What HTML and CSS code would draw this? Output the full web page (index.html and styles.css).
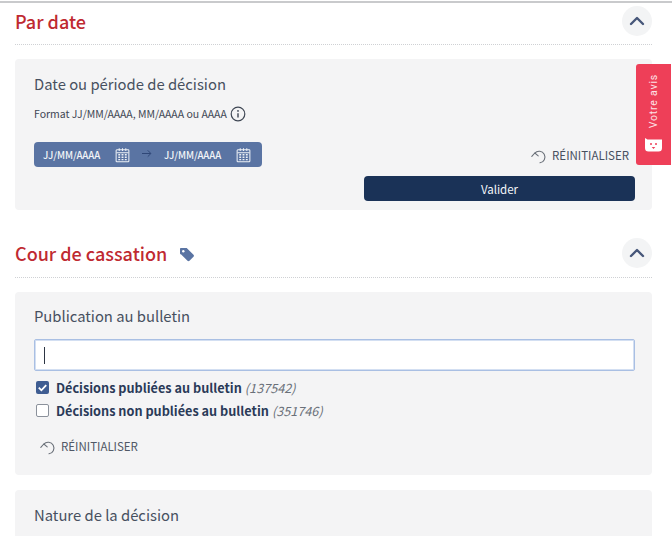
FILE: index.html
```html
<!DOCTYPE html>
<html lang="fr">
<head>
<meta charset="UTF-8">
<meta name="viewport" content="width=device-width, initial-scale=1.0">
<title>Filtres</title>
<link rel="stylesheet" href="styles.css">
</head>
<body>

<svg class="icon-defs" width="0" height="0">
  <symbol id="calendar" viewBox="0 0 16 16">
    <path d="M2 2.500h12a.8.8 0 0 1 .8.8v11a.8.8 0 0 1-.8.8H2a.8.8 0 0 1-.8-.8v-11a.8.8 0 0 1 .8-.8z" fill="none" stroke="currentColor" stroke-width="1.100"/>
    <path d="M4.500 .8v3M8 .8v3M11.500 .8v3M1.500 5.500h13" fill="none" stroke="currentColor" stroke-width="1.100"/>
    <path d="M3.500 7h2v1.600h-2zM7 7h2v1.600H7zM10.500 7h2v1.600h-2zM3.500 9.700h2v1.600h-2zM7 9.700h2v1.600H7zM10.500 9.700h2v1.600h-2zM3.500 12.300h2v1.300h-2zM7 12.300h2v1.300H7zM10.500 12.300h2v1.300h-2z" fill="currentColor"/>
  </symbol>
  <symbol id="reset" viewBox="0 0 16 16">
    <path d="M3.800 5.200A5.800 5.800 0 1 1 9 14.800" fill="none" stroke="currentColor" stroke-width="1.100" stroke-linecap="round"/>
    <path d="M.8 8.400l3-3.400 3.400 2.800" fill="none" stroke="currentColor" stroke-width="1.100" stroke-linecap="round" stroke-linejoin="round"/>
  </symbol>
  <symbol id="chevron" viewBox="0 0 16 10">
    <path d="M2 8l6-6 6 6" fill="none" stroke="currentColor" stroke-width="2.400" stroke-linecap="round" stroke-linejoin="round"/>
  </symbol>
</svg>

<main class="filters">

  <section class="group group-date">
    <header class="group-head">
      <h2 class="group-title">Par date</h2>
      <button class="toggle"><svg width="16" height="10"><use href="#chevron"/></svg></button>
    </header>

    <div class="panel panel-date">
      <h3 class="panel-title">Date ou période de décision</h3>
      <p class="hint">
        Format JJ/MM/AAAA, MM/AAAA ou AAAA
        <svg class="info" width="16" height="16" viewBox="0 0 16 16">
          <circle cx="8" cy="8" r="6.800" fill="none" stroke="currentColor" stroke-width="1.200"/>
          <path d="M8 7.200v4.200" stroke="currentColor" stroke-width="1.400"/>
          <circle cx="8" cy="4.900" r=".9" fill="currentColor"/>
        </svg>
      </p>
      <div class="date-row">
        <div class="date-bar">
          <span class="date-text">JJ/MM/AAAA</span>
          <svg class="date-icon" width="15" height="16"><use href="#calendar"/></svg>
          <svg class="date-arrow" width="10" height="9" viewBox="0 0 11 9">
            <path d="M0 4.500h9.500M6.300 1l3.500 3.500L6.300 8" fill="none" stroke="currentColor" stroke-width="1.100"/>
          </svg>
          <span class="date-text">JJ/MM/AAAA</span>
          <svg class="date-icon" width="15" height="16"><use href="#calendar"/></svg>
        </div>
        <a class="reset"><svg width="16" height="16"><use href="#reset"/></svg>RÉINITIALISER</a>
      </div>
      <button class="submit">Valider</button>
    </div>
  </section>

  <section class="group group-court">
    <header class="group-head">
      <h2 class="group-title">Cour de cassation
        <svg class="tag" width="16" height="15" viewBox="0 0 16 15">
          <path d="M1 1.800A.8.8 0 0 1 1.800 1h5.400c.4 0 .8.200 1 .4l6.300 6.300c.6.600.6 1.400 0 2l-4 4c-.6.600-1.400.6-2 0L2.200 7.400A2 2 0 0 1 1 6.400z" fill="currentColor"/>
          <circle cx="4.300" cy="4.300" r="1.200" fill="#fff"/>
        </svg>
      </h2>
      <button class="toggle"><svg width="16" height="10"><use href="#chevron"/></svg></button>
    </header>

    <div class="panel panel-pub">
      <h3 class="panel-title">Publication au bulletin</h3>
      <div class="search"><span class="caret"></span></div>
      <ul class="options">
        <li class="option">
          <span class="check check-on">
            <svg width="13" height="13" viewBox="0 0 14 14"><path d="M3 7.200l2.800 2.800L11 4.500" fill="none" stroke="#fff" stroke-width="2"/></svg>
          </span>
          <b>Décisions publiées au bulletin</b> <i>(137542)</i>
        </li>
        <li class="option">
          <span class="check"></span>
          <b>Décisions non publiées au bulletin</b> <i>(351746)</i>
        </li>
      </ul>
      <a class="reset reset-pub"><svg width="16" height="16"><use href="#reset"/></svg>RÉINITIALISER</a>
    </div>

    <div class="panel panel-nature">
      <h3 class="panel-title">Nature de la décision</h3>
    </div>
  </section>

</main>

<aside class="feedback">
  <span class="feedback-text">Votre avis</span>
  <svg class="feedback-icon" width="17" height="14" viewBox="0 0 17 14">
    <path d="M0 0l2.500 1.500H17V10a3.500 3.500 0 0 1-3.500 3.500h-10A3.500 3.500 0 0 1 0 10z" fill="#fff"/>
    <circle cx="6" cy="6" r="1" fill="#ee3f58"/>
    <circle cx="11" cy="6" r="1" fill="#ee3f58"/>
    <path d="M6.700 9h3.600L8.500 11z" fill="#ee3f58"/>
  </svg>
</aside>

</body>
</html>
```

FILE: styles.css
```css
* {
  box-sizing: border-box;
}

html, body {
  height: 536px;
  overflow: hidden;
}

body {
  margin: 0;
  padding-top: 1px;
  background: #fff;
  color: #47505f;
  font-family: "Noto Sans CJK SC", "Noto Sans", sans-serif;
}

.icon-defs {
  position: absolute;
}

.filters {
  border-top: 2px solid #c9cacc;
  padding: 0 20px 0 15px;
}

.group-head {
  height: 42px;
  padding-bottom: 6px;
  display: flex;
  align-items: center;
  justify-content: space-between;
  border-bottom: 1px dotted #cfd1d4;
}

.group-court {
  margin-top: 25px;
}

.group-court .group-head {
  height: 43px;
}

.group-title {
  margin: 0;
  color: #bf2a31;
  font-size: 18px;
  line-height: 24px;
  font-weight: 500;
  display: flex;
  align-items: center;
}

.tag {
  margin-left: 12px;
  margin-top: 3px;
  color: #5a74a3;
}

.toggle {
  width: 30px;
  height: 30px;
  padding: 0;
  border: none;
  border-radius: 50%;
  background: #f3f4f5;
  color: #47577a;
  display: flex;
  align-items: center;
  justify-content: center;
}

.panel {
  background: #f4f4f5;
  border-radius: 4px;
  padding: 15px 17px 15px 19px;
  margin-top: 14px;
}

.panel-date {
  height: 151px;
}

.panel-title {
  margin: 0;
  font-size: 14.800px;
  line-height: 20px;
  font-weight: 400;
  color: #47505f;
}

.hint {
  margin: 11px 0 0;
  height: 18px;
  font-size: 10.500px;
  line-height: 18px;
  color: #3f4754;
  display: flex;
  align-items: center;
}

.info {
  margin-left: 3px;
}

.date-row {
  margin-top: 19px;
  display: flex;
  align-items: center;
  justify-content: space-between;
}

.date-bar {
  width: 228px;
  height: 25px;
  background: #5a74a3;
  border-radius: 4px;
  padding: 0 9px;
  display: flex;
  align-items: center;
  color: #fff;
}

.date-text {
  width: 57px;
  flex: none;
  font-size: 9.700px;
  line-height: 14px;
  font-weight: 500;
  color: #f2f4f8;
}

.date-icon {
  flex: none;
  margin-left: 15px;
  color: #eef1f6;
}

.date-arrow {
  flex: none;
  margin: 0 12px 2px 12px;
  color: #2f4777;
}

.reset {
  display: flex;
  align-items: center;
  gap: 5px;
  padding-right: 6px;
  font-size: 11.500px;
  line-height: 16px;
  color: #47505f;
}

.reset svg {
  color: #6a7079;
  margin-top: 2px;
}

.submit {
  display: block;
  width: 271px;
  height: 25px;
  margin: 9px 0 0 auto;
  border: none;
  border-radius: 4px;
  background: #1a3257;
  color: #f4f6f9;
  font-family: inherit;
  font-size: 11.500px;
  font-weight: 400;
  line-height: 16px;
}

.panel-pub {
  height: 183px;
  padding-top: 14px;
}

.search {
  height: 32px;
  margin-top: 13px;
  background: #fff;
  border: 1px solid #a9bfe3;
  border-radius: 2px;
  box-shadow: inset 0 0 0 1px #d3dff2;
  display: flex;
  align-items: center;
  padding-left: 9px;
}

.caret {
  width: 1px;
  height: 17px;
  background: #2d3543;
}

.options {
  list-style: none;
  margin: 5px 0 0;
  padding: 0;
}

.option {
  height: 23px;
  display: flex;
  align-items: center;
  font-size: 12.700px;
  line-height: 18px;
  color: #2a3a58;
}

.option b {
  font-weight: 700;
  margin-right: 3px;
}

.option i {
  color: #6a7079;
}

.check {
  width: 13px;
  height: 13px;
  margin: 0 7px 0 2px;
  background: #fff;
  border: 1px solid #8b919b;
  border-radius: 2px;
  flex: none;
}

.check-on {
  background: #3f5d92;
  border: none;
  display: flex;
}

.reset-pub {
  margin: 15px 0 0 6px;
  color: #505866;
}

.panel-nature {
  height: 60px;
  margin-top: 15px;
}

.feedback {
  position: fixed;
  top: 64px;
  right: 1px;
  width: 35px;
  height: 101px;
  background: #ee3f58;
  border-radius: 3px 0 0 3px;
  display: flex;
  flex-direction: column;
  align-items: center;
  padding-top: 10px;
}

.feedback-text {
  writing-mode: vertical-rl;
  transform: rotate(180deg);
  font-family: "Roboto", sans-serif;
  font-size: 10.500px;
  line-height: 14px;
  letter-spacing: .8px;
  color: #fde3e7;
}

.feedback-icon {
  margin-top: 10px;
}
```
